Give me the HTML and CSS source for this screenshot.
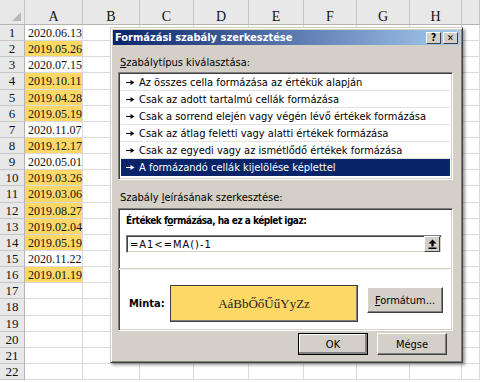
FILE: index.html
```html
<!DOCTYPE html>
<html lang="hu">
<head>
    <meta charset="UTF-8">
    <meta name="viewport" content="width=device-width, initial-scale=1.0">
    <title>Formázási szabály szerkesztése</title>
    <link rel="stylesheet" href="styles.css">
</head>
<body>
    <div class="sheet" id="sheet"></div>

    <div class="dialog">
        <div class="titlebar">
            <span class="title">Formázási szabály szerkesztése</span>
            <span class="tb-btn">?</span>
            <span class="tb-btn close">✕</span>
        </div>
        <div class="dialog-body">
            <div class="group-label"><u>S</u>zabálytípus kiválasztása:</div>
            <div class="rule-list">
                <div class="rule-item"><svg class="bullet" width="9" height="7" viewBox="0 0 9 7"><path d="M0 3h5v1H0z M4.5 1L8.5 3.5 4.5 6z" fill="currentColor"/></svg>Az összes cella formázása az értékük alapján</div>
                <div class="rule-item"><svg class="bullet" width="9" height="7" viewBox="0 0 9 7"><path d="M0 3h5v1H0z M4.5 1L8.5 3.5 4.5 6z" fill="currentColor"/></svg>Csak az adott tartalmú cellák formázása</div>
                <div class="rule-item"><svg class="bullet" width="9" height="7" viewBox="0 0 9 7"><path d="M0 3h5v1H0z M4.5 1L8.5 3.5 4.5 6z" fill="currentColor"/></svg>Csak a sorrend elején vagy végén lévő értékek formázása</div>
                <div class="rule-item"><svg class="bullet" width="9" height="7" viewBox="0 0 9 7"><path d="M0 3h5v1H0z M4.5 1L8.5 3.5 4.5 6z" fill="currentColor"/></svg>Csak az átlag feletti vagy alatti értékek formázása</div>
                <div class="rule-item"><svg class="bullet" width="9" height="7" viewBox="0 0 9 7"><path d="M0 3h5v1H0z M4.5 1L8.5 3.5 4.5 6z" fill="currentColor"/></svg>Csak az egyedi vagy az ismétlődő értékek formázása</div>
                <div class="rule-item selected"><svg class="bullet" width="9" height="7" viewBox="0 0 9 7"><path d="M0 3h5v1H0z M4.5 1L8.5 3.5 4.5 6z" fill="currentColor"/></svg>A formázandó cellák kijelölése képlettel</div>
            </div>

            <div class="group-label second">Szabály <u>l</u>eírásának szerkesztése:</div>
            <div class="edit-panel">
                <div class="panel-label">Értékek f<u>o</u>rmázása, ha ez a képlet igaz:</div>
                <div class="formula-input">
                    <span class="formula">=A1&lt;=MA()-1</span>
                    <span class="collapse-btn">
                        <svg width="9" height="10" viewBox="0 0 9 10"><path d="M4.5 0.5L8.5 4.5H5.6V7.5H3.4V4.5H0.5z M0.5 8.5h8v1.5h-8z" fill="#000"/></svg>
                    </span>
                </div>
                <div class="separator"></div>
                <div class="preview-row">
                    <span class="preview-label">Minta:</span>
                    <div class="preview-box">AáBbŐőŰűYyZz</div>
                    <button class="btn format-btn"><u>F</u>ormátum...</button>
                </div>
            </div>

            <div class="dialog-buttons">
                <button class="btn default">OK</button>
                <button class="btn">Mégse</button>
            </div>
        </div>
    </div>

    <script>
        const values = ['2020.06.13', '2019.05.26', '2020.07.15', '2019.10.11', '2019.04.28', '2019.05.19',
            '2020.11.07', '2019.12.17', '2020.05.01', '2019.03.26', '2019.03.06', '2019.08.27',
            '2019.02.04', '2019.05.19', '2020.11.22', '2019.01.19'];
        const letters = ['A', 'B', 'C', 'D', 'E', 'F', 'G', 'H', ''];

        let html = '<div class="corner"><span class="corner-mark"></span></div>';
        letters.forEach(l => html += `<div class="col-head">${l}</div>`);
        for (let r = 1; r <= 22; r++) {
            const v = values[r - 1] || '';
            const hit = v.startsWith('2019');
            html += `<div class="row-head">${r}</div>`;
            html += `<div class="cell${hit ? ' hit' : ''}">${v}</div>`;
            for (let c = 1; c < letters.length; c++) {
                html += '<div class="cell"></div>';
            }
        }
        document.getElementById('sheet').innerHTML = html;
    </script>
</body>
</html>
```

FILE: styles.css
```css
* {
    box-sizing: border-box;
}
body {
    margin: 0;
    font-family: "Liberation Serif", serif;
    background: #fff;
    overflow: hidden;
}

/* worksheet */
.sheet {
    display: grid;
    grid-template-columns: 25px 58px 57px 54px 55px 55px 53px 53px 52px 1fr;
    grid-template-rows: 25px;
    grid-auto-rows: 16.15px;
    height: 382px;
    color: #111;
}
.corner {
    position: relative;
    background: #e8e8e8;
    border-right: 1px solid #c6c6c6;
    border-bottom: 1px solid #b4b4b4;
}
.corner-mark {
    position: absolute;
    right: 3px;
    bottom: 3px;
    width: 0;
    height: 0;
    border-left: 9px solid transparent;
    border-bottom: 9px solid #b9b9b9;
}
.col-head {
    background: #e8e8e8;
    border-right: 1px solid #c6c6c6;
    border-bottom: 1px solid #b4b4b4;
    font-size: 14px;
    text-align: center;
    padding-top: 9px;
}
.row-head {
    background: #e8e8e8;
    border-right: 1px solid #b4b4b4;
    border-bottom: 1px solid #c6c6c6;
    font-size: 13px;
    line-height: 16px;
    text-align: center;
}
.cell {
    border-right: 1px solid #dadada;
    border-bottom: 1px solid #dadada;
    font-size: 12px;
    line-height: 16px;
    padding-left: 3px;
    white-space: nowrap;
}
.cell.hit {
    background: #fdd867;
}

/* dialog */
.dialog {
    position: absolute;
    left: 110px;
    top: 27px;
    width: 353px;
    height: 336px;
    padding: 2px;
    background: #d4d0c8;
    border: 1px solid;
    border-color: #d4d0c8 #404040 #404040 #d4d0c8;
    box-shadow: inset 1px 1px #fff, inset -1px -1px #808080, 2px 2px 3px rgba(0, 0, 0, 0.4);
    font-family: "DejaVu Sans Condensed", "DejaVu Sans", sans-serif;
    font-stretch: condensed;
    font-size: 11px;
    color: #000;
}
.titlebar {
    display: flex;
    align-items: center;
    height: 15px;
    padding: 0 2px;
    background: linear-gradient(to right, #0a246a, #a6caf0);
    color: #fff;
}
.title {
    flex: 1;
    font-weight: bold;
    font-size: 11px;
}
.tb-btn {
    display: flex;
    justify-content: center;
    align-items: center;
    width: 15px;
    height: 12px;
    margin-left: 2px;
    background: #d4d0c8;
    color: #000;
    font-weight: bold;
    font-size: 10px;
    border: 1px solid;
    border-color: #fff #404040 #404040 #fff;
}
.tb-btn.close {
    font-size: 9px;
}
.dialog-body {
    padding: 11px 0 0 5px;
}
.group-label {
    height: 13px;
    line-height: 13px;
    margin-left: 2px;
}
.group-label.second {
    margin-top: 11px;
}
.rule-list {
    width: 335px;
    height: 108px;
    margin-top: 3px;
    padding: 1px;
    background: #fff;
    border: 1px solid;
    border-color: #808080 #fff #fff #808080;
    box-shadow: inset 1px 1px #404040, inset -1px -1px #d4d0c8;
}
.rule-item {
    display: flex;
    align-items: center;
    height: 17px;
    padding-left: 5px;
    margin: 0 1px;
    border-bottom: 1px solid #e2e2e2;
    white-space: nowrap;
}
.rule-item.selected {
    background: #0a246a;
    color: #fff;
    border-bottom: none;
}
.bullet {
    margin-right: 4px;
    flex-shrink: 0;
}
.edit-panel {
    width: 335px;
    height: 123px;
    margin-top: 4px;
    padding: 5px 6px 0 7px;
    background: #fff;
    border: 1px solid;
    border-color: #808080 #fff #fff #808080;
    box-shadow: inset 1px 1px #404040, inset -1px -1px #d4d0c8;
}
.panel-label {
    height: 13px;
    line-height: 13px;
    font-weight: bold;
    font-size: 10px;
    letter-spacing: -0.5px;
}
.formula-input {
    display: flex;
    align-items: center;
    width: 316px;
    height: 18px;
    margin-top: 8px;
    padding: 0 0 0 2px;
    border: 1px solid;
    border-color: #808080 #fff #fff #808080;
    box-shadow: inset 1px 1px #404040, inset -1px -1px #d4d0c8;
}
.formula {
    flex: 1;
    font-size: 11px;
    letter-spacing: 1px;
    padding-left: 1px;
}
.collapse-btn {
    display: flex;
    justify-content: center;
    align-items: center;
    width: 16px;
    height: 16px;
    background: #d4d0c8;
    border: 1px solid;
    border-color: #fff #404040 #404040 #fff;
    margin-right: 1px;
}
.separator {
    height: 2px;
    margin: 15px -6px 0 -7px;
    border-top: 1px solid #d4d0c8;
    border-bottom: 1px solid #f4f4f4;
}
.preview-row {
    display: flex;
    align-items: flex-start;
    margin-top: 15px;
}
.preview-label {
    width: 44px;
    line-height: 37px;
    padding-left: 3px;
    font-weight: bold;
}
.preview-box {
    width: 188px;
    height: 37px;
    line-height: 35px;
    background: #fdd867;
    border: 1px solid #404040;
    box-shadow: inset -1px -1px #808080;
    text-align: center;
    font-family: "Liberation Serif", serif;
    font-size: 13px;
    color: #222;
}
.btn {
    background: #d4d0c8;
    border: 1px solid;
    border-color: #fff #404040 #404040 #fff;
    box-shadow: inset -1px -1px #808080;
    font-family: inherit;
    font-stretch: condensed;
    font-size: 11px;
    color: #000;
    padding: 0;
}
.format-btn {
    width: 76px;
    height: 26px;
    margin: 2px 0 0 9px;
}
.dialog-buttons {
    display: flex;
    justify-content: flex-end;
    gap: 9px;
    margin-top: 2px;
    padding-right: 13px;
}
.dialog-buttons .btn {
    width: 70px;
    height: 22px;
}
.btn.default {
    outline: 1px solid #000;
    outline-offset: -1px;
    box-shadow: inset -2px -2px #808080, inset 1px 1px #fff;
}
```
